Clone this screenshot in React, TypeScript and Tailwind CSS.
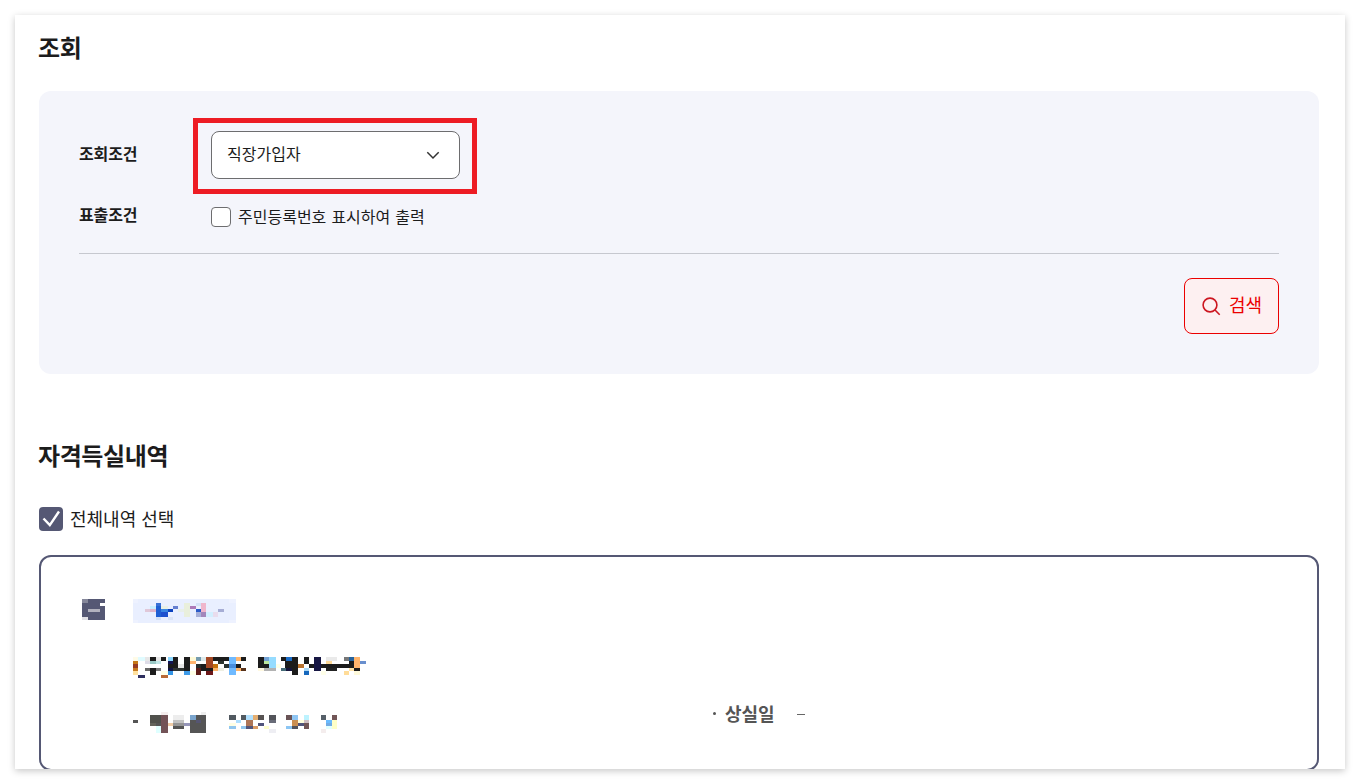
import clsx from 'clsx';

type Cell = [x: number, y: number, w: number, h: number, fill: string];

const badgeCells: Cell[] = [
  [0, 0, 309, 72, '#e9efff'],
  [0, 0, 15, 12, '#eef2ff'],
  [288, 0, 21, 12, '#eef2ff'],
  [0, 63, 15, 9, '#eef2ff'],
  [288, 63, 21, 9, '#eef2ff'],
  [51, 21, 18, 9, '#c8eeff'],
  [36, 30, 15, 9, '#e0c8d9'],
  [51, 30, 18, 9, '#dfb5cb'],
  [69, 12, 15, 9, '#3871d6'],
  [69, 21, 15, 33, '#1f5fd3'],
  [84, 21, 21, 9, '#e8efe6'],
  [84, 30, 21, 9, '#3986e2'],
  [105, 30, 15, 9, '#0941bf'],
  [84, 39, 21, 15, '#1d50ce'],
  [69, 54, 15, 9, '#d3e0f5'],
  [105, 54, 15, 9, '#d9e3f6'],
  [120, 21, 15, 9, '#657fd0'],
  [135, 30, 18, 9, '#e8efe9'],
  [153, 12, 18, 42, '#e9efdc'],
  [171, 21, 18, 9, '#ad79b9'],
  [189, 12, 15, 9, '#d4e1f7'],
  [189, 30, 15, 9, '#2b5bc9'],
  [189, 39, 15, 15, '#a7b0d9'],
  [204, 12, 15, 27, '#efb6cc'],
  [204, 39, 15, 15, '#a287bb'],
  [219, 39, 21, 15, '#d2efff'],
  [240, 39, 15, 15, '#e9dced'],
  [255, 30, 18, 9, '#a6add5'],
];

const nameCells: Cell[] = [
  [0, 0, 15, 12, '#fffbe7'],
  [0, 12, 15, 9, '#c67817'],
  [0, 21, 15, 12, '#973b22'],
  [0, 33, 15, 9, '#c87b20'],
  [0, 42, 15, 12, '#ffe2a0'],
  [15, 0, 21, 12, '#e0fbff'],
  [15, 54, 21, 9, '#2f305f'],
  [36, 0, 15, 12, '#e7e7e7'],
  [36, 12, 18, 9, '#dedde8'],
  [36, 33, 15, 9, '#676767'],
  [51, 0, 18, 12, '#1c1c1c'],
  [51, 12, 18, 9, '#9ac8c5'],
  [51, 33, 18, 21, '#1c1c1c'],
  [69, 0, 15, 12, '#e8e8e8'],
  [69, 12, 15, 9, '#c2e6e6'],
  [69, 33, 15, 9, '#777777'],
  [84, 0, 15, 12, '#1c1c1c'],
  [84, 54, 21, 9, '#b96a36'],
  [105, 0, 15, 12, '#8bd7ff'],
  [105, 12, 15, 9, '#151552'],
  [105, 21, 15, 12, '#1c1c1c'],
  [105, 33, 15, 9, '#121345'],
  [105, 42, 15, 12, '#3394e5'],
  [84, 42, 21, 12, '#ffffe7'],
  [120, 0, 15, 33, '#1c1c1c'],
  [135, 21, 18, 12, '#e7e7e7'],
  [120, 33, 51, 9, '#303633'],
  [153, 0, 18, 42, '#1c1c1c'],
  [153, 42, 18, 12, '#3e9be8'],
  [171, 0, 18, 12, '#fffad7'],
  [171, 12, 18, 9, '#ffb46e'],
  [171, 42, 18, 12, '#ffffe6'],
  [189, 0, 15, 12, '#769caf'],
  [189, 21, 15, 12, '#262c2a'],
  [189, 33, 15, 21, '#5d1b17'],
  [204, 0, 15, 12, '#dce9eb'],
  [204, 21, 15, 21, '#1c1c1c'],
  [219, 0, 21, 33, '#a54723'],
  [219, 33, 21, 9, '#1c1c1c'],
  [219, 42, 21, 12, '#6b1718'],
  [240, 0, 15, 12, '#1c1c1c'],
  [240, 21, 15, 12, '#c4720d'],
  [240, 33, 15, 9, '#ffb46b'],
  [255, 0, 33, 12, '#1c1c1c'],
  [255, 12, 18, 9, '#2c3430'],
  [255, 33, 18, 9, '#eeefe3'],
  [273, 21, 15, 12, '#28312f'],
  [288, 0, 21, 54, '#70baff'],
  [288, 21, 21, 12, '#4a8ddb'],
  [309, 0, 15, 12, '#ffb66f'],
  [309, 21, 15, 12, '#1c1c1c'],
  [309, 33, 15, 9, '#ffb46a'],
  [324, 0, 15, 12, '#1c1c1c'],
  [324, 33, 15, 9, '#573119'],
  [375, 0, 18, 33, '#1c1c1c'],
  [375, 33, 18, 9, '#fff9e1'],
  [393, 0, 15, 12, '#74a3d5'],
  [393, 12, 15, 9, '#bce79e'],
  [393, 21, 15, 12, '#1c1c1c'],
  [393, 33, 36, 9, '#b2b2b2'],
  [408, 0, 21, 33, '#96dcff'],
  [429, 21, 15, 12, '#ffffe7'],
  [444, 0, 15, 12, '#1c1c1c'],
  [444, 33, 15, 9, '#466c78'],
  [459, 0, 18, 12, '#1b6cc7'],
  [456, 12, 21, 21, '#1c1c1c'],
  [459, 33, 18, 9, '#15153c'],
  [477, 0, 18, 54, '#1c1c1c'],
  [495, 21, 18, 12, '#ba7330'],
  [513, 0, 15, 21, '#1c1c1c'],
  [513, 33, 15, 9, '#a9d8f6'],
  [513, 42, 15, 12, '#1668bd'],
  [528, 21, 15, 12, '#1c1c1c'],
  [543, 0, 21, 42, '#171743'],
  [564, 21, 84, 12, '#1c1c1c'],
  [564, 42, 15, 12, '#ffffe9'],
  [579, 0, 33, 12, '#eaeaea'],
  [579, 12, 18, 9, '#ffd998'],
  [579, 33, 33, 9, '#222222'],
  [633, 0, 15, 12, '#777777'],
  [633, 42, 15, 12, '#ffdc98'],
  [648, 0, 15, 12, '#26639d'],
  [648, 12, 15, 21, '#1c1c1c'],
  [648, 33, 15, 9, '#ffe3a7'],
  [663, 0, 18, 33, '#ffb46c'],
  [663, 33, 18, 9, '#1c1c1c'],
  [663, 42, 18, 12, '#fffadb'],
  [681, 12, 18, 9, '#698fce'],
];

const dateCells: Cell[] = [
  [0, 24, 15, 9, '#555555'],
  [51, 9, 33, 24, '#50514c'],
  [51, 33, 18, 9, '#63635b'],
  [69, 33, 15, 9, '#555555'],
  [69, 42, 15, 21, '#dfffff'],
  [84, 0, 21, 9, '#f4eded'],
  [84, 9, 21, 54, '#735357'],
  [105, 33, 15, 9, '#f1cda8'],
  [120, 9, 33, 15, '#ededed'],
  [120, 24, 33, 9, '#c2c2c2'],
  [120, 33, 33, 9, '#969696'],
  [120, 42, 33, 9, '#555555'],
  [153, 33, 18, 9, '#9797ba'],
  [171, 9, 18, 15, '#7ba5cd'],
  [171, 24, 18, 39, '#555555'],
  [189, 9, 30, 54, '#555555'],
  [189, 24, 15, 9, '#555572'],
  [204, 0, 15, 9, '#eeeeee'],
  [288, 9, 21, 15, '#515960'],
  [288, 33, 21, 9, '#ffffe4'],
  [288, 42, 21, 9, '#91c6ee'],
  [309, 24, 15, 9, '#addfff'],
  [324, 9, 15, 15, '#515960'],
  [324, 42, 15, 9, '#91c6ee'],
  [339, 9, 21, 15, '#b2e1ff'],
  [339, 24, 21, 18, '#ad7557'],
  [339, 42, 21, 9, '#53557a'],
  [360, 9, 15, 15, '#e4ae71'],
  [360, 42, 15, 9, '#db9d67'],
  [375, 9, 18, 15, '#575352'],
  [375, 33, 18, 9, '#51547a'],
  [393, 42, 15, 9, '#ffffcd'],
  [408, 9, 21, 15, '#53545a'],
  [408, 24, 21, 9, '#686b78'],
  [408, 51, 21, 12, '#eeeef3'],
  [459, 9, 18, 15, '#695356'],
  [459, 42, 18, 9, '#8cc6f4'],
  [477, 9, 18, 15, '#8fc6f4'],
  [477, 24, 18, 18, '#cb9052'],
  [477, 42, 18, 9, '#53555e'],
  [495, 24, 18, 9, '#ffffdc'],
  [495, 33, 18, 9, '#51547a'],
  [513, 9, 15, 15, '#bdf3ff'],
  [513, 24, 15, 9, '#cfbfc3'],
  [513, 33, 15, 18, '#715657'],
  [564, 9, 15, 15, '#566069'],
  [564, 51, 15, 12, '#f4eded'],
  [579, 24, 18, 9, '#69bbff'],
  [579, 33, 18, 9, '#71abe4'],
  [579, 42, 18, 9, '#e1ffff'],
  [597, 9, 15, 15, '#725657'],
  [597, 24, 15, 27, '#ffffc7'],
];

const checkCells: Cell[] = [
  [0, 0, 69, 63, '#555874'],
  [0, 0, 18, 12, '#85879a'],
  [54, 12, 15, 9, '#ffffff'],
  [18, 30, 36, 9, '#b2b2be'],
  [0, 54, 18, 9, '#e1e1e6'],
];

// cells are measured in thirds of a pixel
function Mosaic({ cells, viewBox, className }: { cells: Cell[]; viewBox: string; className?: string }) {
  return (
    <svg viewBox={viewBox} className={clsx('block shrink-0', className)} shapeRendering="crispEdges" aria-hidden="true">
      {cells.map(([x, y, w, h, fill], i) => (
        <rect key={i} x={x} y={y} width={w} height={h} fill={fill} />
      ))}
    </svg>
  );
}

function SearchPanel() {
  return (
    <section className="mt-[28px] h-[283px] shrink-0 rounded-xl bg-[#f4f5fb] px-10 pt-[27px]">
      <div className="flex h-[76px] items-center">
        <span className="w-[114px] pb-1.5 font-bold tracking-[-0.15px]">조회조건</span>
        <div className="border-5 border-[#ed1c24] pt-[8px] pr-[12px] pb-[10px] pl-[13px]">
          <button className="flex h-12 w-[249px] items-center justify-between rounded-lg border border-[#6d6d6f] bg-white pr-[19px] pl-[15px]">
            <span className="pb-[5px]">직장가입자</span>
            <svg className="size-[14px]" viewBox="0 0 14 14" fill="none" stroke="#333" strokeWidth="1.5">
              <path d="M1.3 4.2 7 10l5.7-5.8" />
            </svg>
          </button>
        </div>
      </div>

      <div className="flex h-[60px] items-start border-b border-[#c6c8cf] pt-[8px]">
        <span className="w-[132px] font-bold tracking-[-0.15px]">표출조건</span>
        <label className="flex items-center gap-[7px] pt-[2px]">
          <span className="mt-px size-5 rounded-[4px] border border-[#6d6d6f] bg-white" />
          <span className="[word-spacing:1.5px]">주민등록번호 표시하여 출력</span>
        </label>
      </div>

      <div className="mt-6 flex justify-end">
        <button className="flex h-14 w-[95px] items-center rounded-lg border border-[#eb0000] bg-[#fdf0f1] pl-[17px] text-lg text-[#eb0000]">
          <svg className="mr-[8px] size-[19px]" viewBox="0 0 19 19" fill="none" stroke="#cc1620" strokeWidth="1.6">
            <circle cx="8" cy="8" r="6.9" />
            <path d="m13 13 4.7 4.7" />
          </svg>
          <span className="pb-[5px]">검색</span>
        </button>
      </div>
    </section>
  );
}

function HistoryCard() {
  return (
    <article className="mt-6 h-[216px] shrink-0 rounded-xl border-2 border-[#555874] pt-[42px] pl-[41px]">
      <div className="flex items-start">
        <Mosaic cells={checkCells} viewBox="0 0 69 63" className="h-[21px] w-[23px]" />
        <Mosaic cells={badgeCells} viewBox="0 0 309 72" className="ml-7 h-6 w-[103px]" />
      </div>
      <Mosaic cells={nameCells} viewBox="0 0 699 63" className="mt-[34px] ml-[51px] h-[21px] w-[233px]" />
      <div className="mt-[34px] ml-[51px] flex items-start">
        <Mosaic cells={dateCells} viewBox="0 0 612 63" className="h-[21px] w-[204px]" />
        <div className="ml-[376px] flex h-[3px] items-center text-lg text-[#555]">
          <span className="mr-[9px] size-[3px] rounded-full bg-[#555]" />
          <span className="pb-[2px] font-bold">상실일</span>
          <span className="mt-[2px] ml-[22px] h-[1.5px] w-[8px] bg-[#666]" />
        </div>
      </div>
    </article>
  );
}

export default function App() {
  return (
    <div className="h-screen overflow-hidden bg-white p-[15px] font-['Noto_Sans_CJK_KR',sans-serif] text-base leading-6 text-[#1c1c1c]">
      <main className="flex h-[754px] flex-col overflow-hidden bg-white pt-[16px] pr-[26px] pl-6 shadow-[0_2px_7px_rgba(0,0,0,0.22)]">
        <h2 className="-ml-px h-8 shrink-0 text-2xl leading-8 font-bold tracking-[-0.4px]">조회</h2>
        <SearchPanel />
        <h2 className="mt-[65px] -ml-px h-8 shrink-0 text-2xl leading-8 font-bold tracking-[-0.4px]">자격득실내역</h2>
        <label className="mt-[36px] flex h-6 shrink-0 items-center gap-[7px] text-lg leading-6">
          <span className="flex size-6 items-center justify-center rounded-[4px] bg-[#555874]">
            <svg className="size-6" viewBox="0 0 24 24" fill="none" stroke="white" strokeWidth="2.4">
              <path d="m4.5 11.5 6.3 6.6L20 4.5" />
            </svg>
          </span>
          <span className="pb-[3px] [word-spacing:1px]">전체내역 선택</span>
        </label>
        <HistoryCard />
      </main>
    </div>
  );
}
